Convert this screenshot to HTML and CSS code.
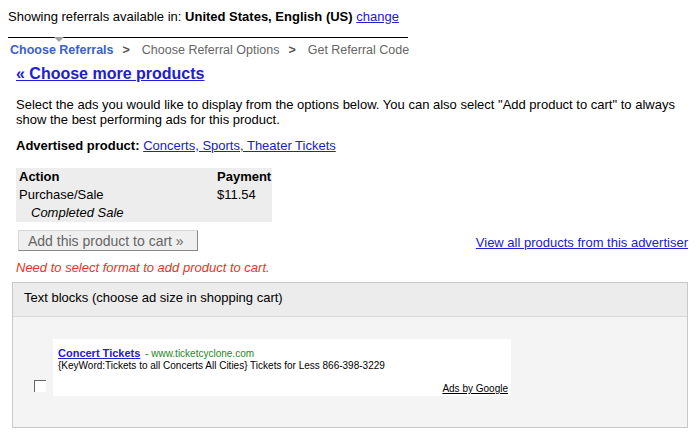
FILE: index.html
```html
<!DOCTYPE html>
<html>
<head>
<meta charset="utf-8">
<link rel="stylesheet" href="styles.css">
</head>
<body>
<div class="page">
  <div class="locale">Showing referrals available in: <b>United States, English (US)</b> <a href="#">change</a></div>
  <div class="steps">
    <span class="step active">Choose Referrals<span class="pointer"></span></span>
    <span class="sep">&gt;</span>
    <span class="step">Choose Referral Options</span>
    <span class="sep">&gt;</span>
    <span class="step">Get Referral Code</span>
  </div>
  <div class="content">
    <a class="back" href="#">« Choose more products</a>
    <p class="intro">Select the ads you would like to display from the options below. You can also select "Add product to cart" to always show the best performing ads for this product.</p>
    <p class="advertised"><b>Advertised product:</b> <a href="#">Concerts, Sports, Theater Tickets</a></p>
    <table class="actions">
      <tr><th class="c1">Action</th><th>Payment</th></tr>
      <tr><td>Purchase/Sale</td><td>$11.54</td></tr>
      <tr><td class="sub" colspan="2">Completed Sale</td></tr>
    </table>
    <div class="cartrow">
      <button class="cartbtn" type="button">Add this product to cart »</button>
      <a class="viewall" href="#">View all products from this advertiser</a>
    </div>
    <div class="warn">Need to select format to add product to cart.</div>
  </div>
  <div class="box">
    <div class="boxhead">Text blocks (choose ad size in shopping cart)</div>
    <div class="boxbody">
      <span class="check"></span>
      <div class="ad">
        <div class="adline"><a class="adtitle" href="#">Concert Tickets</a> <span class="adurl">- www.ticketcyclone.com</span></div>
        <div class="addesc">{KeyWord:Tickets to all Concerts All Cities} Tickets for Less 866-398-3229</div>
        <div class="adsby"><a href="#">Ads by Google</a></div>
      </div>
    </div>
  </div>
</div>
</body>
</html>
```
FILE: styles.css
```css
html, body {
  margin: 0;
  padding: 0;
  background: #fff;
}
body {
  font-family: "Liberation Sans", Arial, sans-serif;
  font-size: 13px;
  color: #000;
}
a { color: #2020cc; }
.page {
  padding: 4px 12px 0 8px;
}
.locale {
  line-height: 16px;
  padding-top: 5px;
  white-space: nowrap;
}
.steps {
  margin-top: 12px;
  width: 398px;
  border-top: 1px solid #000;
  padding: 4px 0 0 2px;
  line-height: 16px;
  font-size: 12.5px;
  color: #666;
  display: flex;
  white-space: nowrap;
}
.step { position: relative; flex: none; }
.step.active {
  color: #3a62c4;
  font-weight: bold;
}
.pointer {
  position: absolute;
  left: 44px;
  top: -5px;
  width: 0;
  height: 0;
  border-left: 5px solid transparent;
  border-right: 5px solid transparent;
  border-top: 5px solid #a0a0a0;
}
.sep {
  flex: none;
  font-weight: bold;
  color: #555;
  margin: 0 12px 0 9px;
}
.content {
  padding-left: 8px;
}
.back {
  display: inline-block;
  margin-top: 7px;
  font-size: 16px;
  font-weight: bold;
  line-height: 18px;
}
.intro {
  margin: 14px 0 0 0;
  line-height: 15px;
  width: 680px;
}
.advertised {
  margin: 11px 0 0 0;
  line-height: 16px;
}
.actions {
  margin-top: 14px;
  background: #ededed;
  border-collapse: collapse;
  width: 256px;
}
.actions th, .actions td {
  text-align: left;
  padding: 0 0 0 3px;
  line-height: 18px;
  font-size: 13px;
}
.actions th.c1 { width: 195px; }
.actions td.sub {
  font-style: italic;
  padding-left: 15px;
}
.cartrow {
  display: flex;
  justify-content: space-between;
  align-items: flex-end;
  margin-top: 8px;
  padding-left: 2px;
}
.cartbtn {
  font-family: "Liberation Sans", Arial, sans-serif;
  font-size: 14px;
  color: #666;
  background: #efefef;
  border: 1px solid #d8d8d8;
  border-right-color: #888;
  border-bottom-color: #888;
  padding: 1px 9px;
  height: 21px;
  width: 180px;
  text-align: left;
}
.viewall {
  line-height: 16px;
}
.warn {
  margin-top: 9px;
  color: #e3361c;
  font-style: italic;
  line-height: 16px;
}
.box {
  margin: 6px 0 0 4px;
  border: 1px solid #c8c8c8;
  background: #f4f4f4;
  width: 674px;
}
.boxhead {
  background: #ececec;
  border-bottom: 1px solid #d8d8d8;
  height: 33px;
  line-height: 29px;
  padding-left: 11px;
}
.boxbody {
  display: flex;
  align-items: flex-end;
  padding: 22px 0 31px 21px;
}
.check {
  width: 11px;
  height: 11px;
  border-top: 1px solid #666;
  border-left: 1px solid #666;
  background: #fff;
  margin-right: 7px;
  margin-bottom: 4px;
}
.ad {
  background: #fff;
  width: 458px;
  height: 57px;
  padding: 8px 3px 0 5px;
  box-sizing: border-box;
  font-size: 10px;
  line-height: 12px;
}
.adtitle {
  font-size: 11px;
  font-weight: bold;
}
.adurl { color: #228822; margin-left: 2px; }
.addesc { color: #000; }
.adsby {
  text-align: right;
  margin-top: 11px;
}
.adsby a { color: #000; }
```
